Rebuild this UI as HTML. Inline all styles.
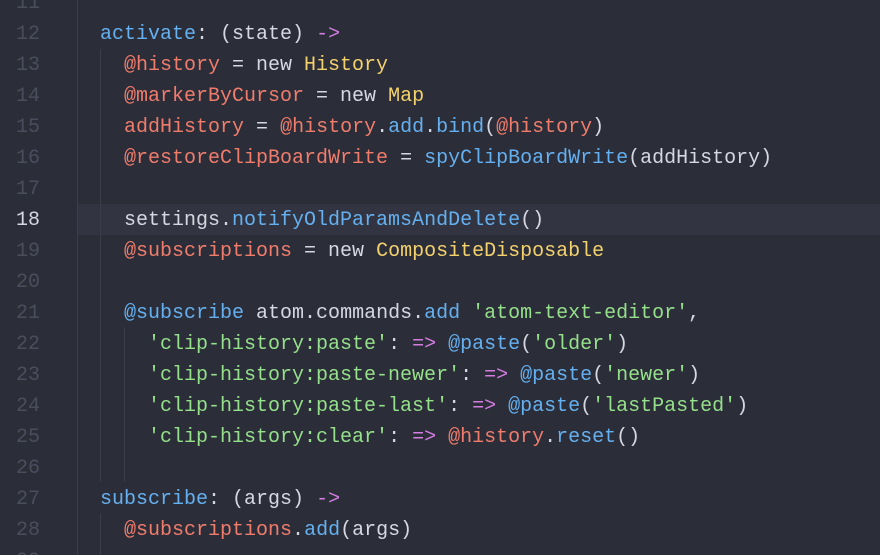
<!DOCTYPE html>
<html><head><meta charset="utf-8"><style>
html,body{margin:0;padding:0;overflow:hidden;height:555px}
body{width:880px;height:555px;overflow:hidden;background:#2b2d38;position:relative;font-family:"Liberation Mono","DejaVu Sans Mono",monospace;font-size:20px;color:#d5d8e2}
.hl{position:absolute;left:77px;right:0;top:204px;height:31px;background:#323541}
.g{position:absolute;width:1px;background:#3b3e4a}
.l{position:absolute;left:0;height:31px;line-height:31px;white-space:pre;width:880px}
.n{position:absolute;right:840px;color:#4a4e5c;text-align:right}
.n.c{color:#d5d8e2}
.t{position:absolute;left:76px}
.b{color:#65b0f0}.r{color:#f07c6c}.y{color:#f3d16c}.s{color:#95e08a}.p{color:#d47ee2}
</style></head><body>
<div class="hl"></div>
<div class="g" style="left:77px;top:0;height:555px"></div>
<div class="g" style="left:100px;top:49px;height:433px"></div>
<div class="g" style="left:100px;top:514px;height:41px"></div>
<div class="g" style="left:124px;top:328px;height:154px"></div>

<div class="l" style="top:-12px"><span class="n">11</span></div>
<div class="l" style="top:19px"><span class="n">12</span><span class="t">  <span class="b">activate</span>: (state) <span class="p">-&gt;</span></span></div>
<div class="l" style="top:50px"><span class="n">13</span><span class="t">    <span class="r">@history</span> = new <span class="y">History</span></span></div>
<div class="l" style="top:81px"><span class="n">14</span><span class="t">    <span class="r">@markerByCursor</span> = new <span class="y">Map</span></span></div>
<div class="l" style="top:112px"><span class="n">15</span><span class="t">    <span class="r">addHistory</span> = <span class="r">@history</span>.<span class="b">add</span>.<span class="b">bind</span>(<span class="r">@history</span>)</span></div>
<div class="l" style="top:143px"><span class="n">16</span><span class="t">    <span class="r">@restoreClipBoardWrite</span> = <span class="b">spyClipBoardWrite</span>(addHistory)</span></div>
<div class="l" style="top:174px"><span class="n">17</span></div>
<div class="l" style="top:205px"><span class="n c">18</span><span class="t">    settings.<span class="b">notifyOldParamsAndDelete</span>()</span></div>
<div class="l" style="top:236px"><span class="n">19</span><span class="t">    <span class="r">@subscriptions</span> = new <span class="y">CompositeDisposable</span></span></div>
<div class="l" style="top:267px"><span class="n">20</span></div>
<div class="l" style="top:298px"><span class="n">21</span><span class="t">    <span class="b">@subscribe</span> atom.commands.<span class="b">add</span> <span class="s">'atom-text-editor'</span>,</span></div>
<div class="l" style="top:329px"><span class="n">22</span><span class="t">      <span class="s">'clip-history:paste'</span>: <span class="p">=&gt;</span> <span class="b">@paste</span>(<span class="s">'older'</span>)</span></div>
<div class="l" style="top:360px"><span class="n">23</span><span class="t">      <span class="s">'clip-history:paste-newer'</span>: <span class="p">=&gt;</span> <span class="b">@paste</span>(<span class="s">'newer'</span>)</span></div>
<div class="l" style="top:391px"><span class="n">24</span><span class="t">      <span class="s">'clip-history:paste-last'</span>: <span class="p">=&gt;</span> <span class="b">@paste</span>(<span class="s">'lastPasted'</span>)</span></div>
<div class="l" style="top:422px"><span class="n">25</span><span class="t">      <span class="s">'clip-history:clear'</span>: <span class="p">=&gt;</span> <span class="r">@history</span>.<span class="b">reset</span>()</span></div>
<div class="l" style="top:453px"><span class="n">26</span></div>
<div class="l" style="top:484px"><span class="n">27</span><span class="t">  <span class="b">subscribe</span>: (args) <span class="p">-&gt;</span></span></div>
<div class="l" style="top:515px"><span class="n">28</span><span class="t">    <span class="r">@subscriptions</span>.<span class="b">add</span>(args)</span></div>
<div class="l" style="top:546px;height:9px;overflow:hidden"><span class="n">29</span></div>
</body></html>
